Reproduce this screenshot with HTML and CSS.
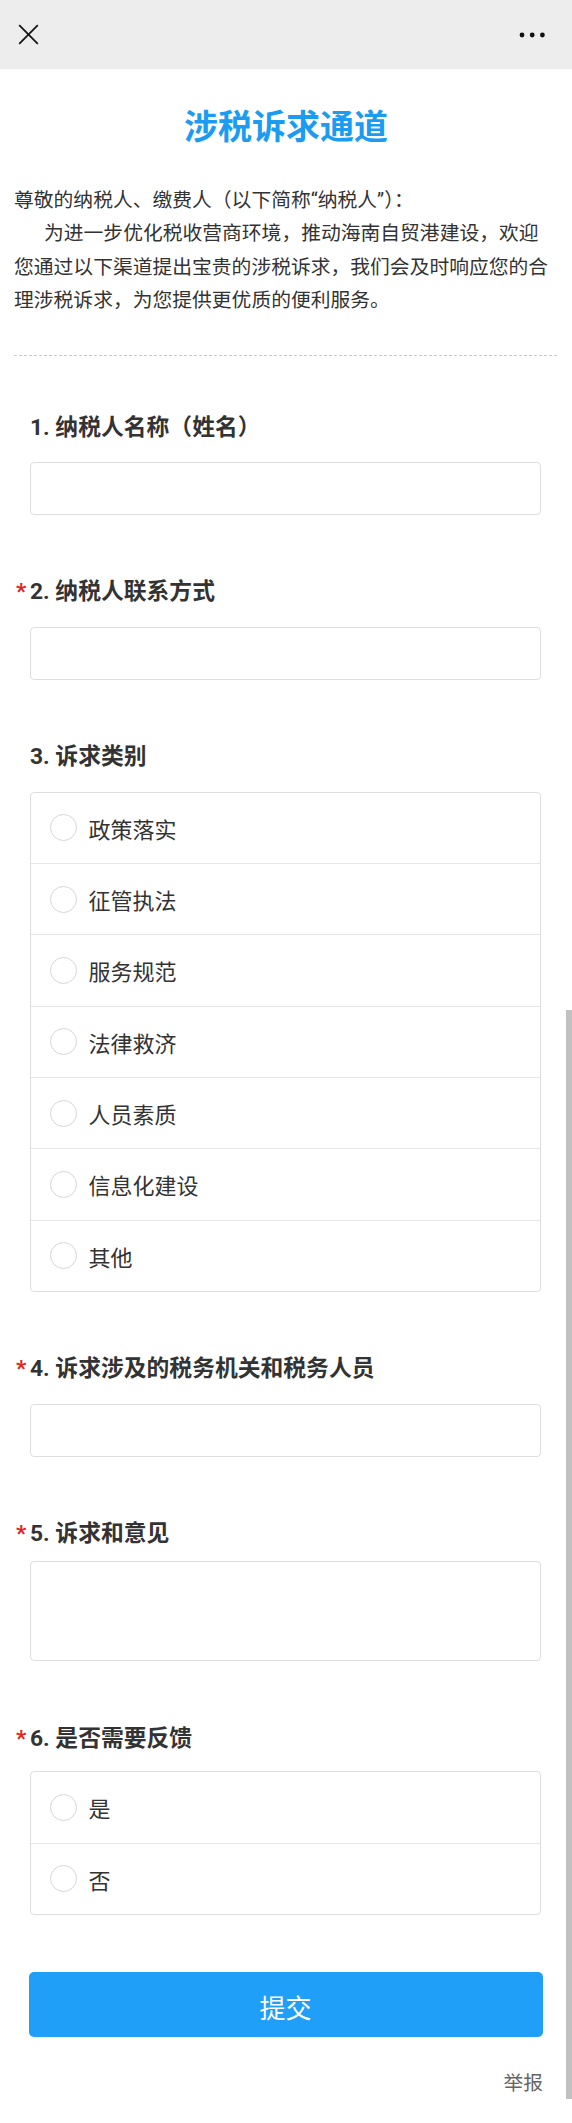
FILE: index.html
```html
<!DOCTYPE html>
<html lang="zh-CN">
<head>
<meta charset="utf-8">
<title>涉税诉求通道</title>
<link rel="stylesheet" href="styles.css">
</head>
<body>
<header class="topbar">
  <svg class="icon-close" width="21" height="21" viewBox="0 0 21 21" aria-hidden="true"><path d="M1.2 1.2 L19.8 19.8 M19.8 1.2 L1.2 19.8" stroke="#161616" stroke-width="1.8" fill="none"/></svg>
  <svg class="icon-more" width="26" height="6" viewBox="0 0 26 6" aria-hidden="true"><circle cx="3" cy="3" r="2.4"/><circle cx="13.2" cy="3" r="2.4"/><circle cx="23.4" cy="3" r="2.4"/></svg>
</header>
<main class="page">
  <h1 class="title">涉税诉求通道</h1>
  <div class="intro">
    <p>尊敬的纳税人、缴费人（以下简称“纳税人”）：</p>
    <p class="indent">为进一步优化税收营商环境，推动海南自贸港建设，欢迎您通过以下渠道提出宝贵的涉税诉求，我们会及时响应您的合理涉税诉求，为您提供更优质的便利服务。</p>
  </div>
  <div class="divider"></div>
  <form class="form">
    <div class="question">
      <div class="q-label"><span class="star"></span><span>1. 纳税人名称（姓名）</span></div>
      <input class="field" type="text">
    </div>
    <div class="question">
      <div class="q-label"><span class="star">*</span><span>2. 纳税人联系方式</span></div>
      <input class="field" type="text">
    </div>
    <div class="question">
      <div class="q-label"><span class="star"></span><span>3. 诉求类别</span></div>
      <div class="options">
        <label class="option"><input class="radio" type="radio" name="q3"><span>政策落实</span></label>
        <label class="option"><input class="radio" type="radio" name="q3"><span>征管执法</span></label>
        <label class="option"><input class="radio" type="radio" name="q3"><span>服务规范</span></label>
        <label class="option"><input class="radio" type="radio" name="q3"><span>法律救济</span></label>
        <label class="option"><input class="radio" type="radio" name="q3"><span>人员素质</span></label>
        <label class="option"><input class="radio" type="radio" name="q3"><span>信息化建设</span></label>
        <label class="option"><input class="radio" type="radio" name="q3"><span>其他</span></label>
      </div>
    </div>
    <div class="question">
      <div class="q-label"><span class="star">*</span><span>4. 诉求涉及的税务机关和税务人员</span></div>
      <input class="field" type="text">
    </div>
    <div class="question">
      <div class="q-label"><span class="star">*</span><span>5. 诉求和意见</span></div>
      <textarea class="field field-area"></textarea>
    </div>
    <div class="question">
      <div class="q-label"><span class="star">*</span><span>6. 是否需要反馈</span></div>
      <div class="options options-tight">
        <label class="option"><input class="radio" type="radio" name="q6"><span>是</span></label>
        <label class="option"><input class="radio" type="radio" name="q6"><span>否</span></label>
      </div>
    </div>
    <button class="submit" type="button">提交</button>
    <div class="report">举报</div>
  </form>
</main>
<div class="scrollbar"></div>
</body>
</html>
```

FILE: styles.css
```css
html, body {
  margin: 0;
  padding: 0;
  background: #fff;
}

body {
  position: relative;
  font-family: Roboto, "Noto Sans CJK SC", sans-serif;
  color: #333;
}

.topbar {
  height: 69px;
  box-sizing: border-box;
  background: #ededed;
  display: flex;
  align-items: center;
  justify-content: space-between;
  padding: 0 26.7px 0 18px;
}

.icon-close, .icon-more {
  display: block;
}

.icon-more circle {
  fill: #111;
}

.title {
  margin: 36.3px 0 0;
  font-size: 34px;
  line-height: 44px;
  font-weight: 700;
  color: #1c9cf0;
  text-align: center;
}

.intro {
  margin: 34.7px 15px 0 14px;
  font-size: 19.8px;
  line-height: 33.5px;
  color: #333;
}

.intro p {
  margin: 0;
}

.indent {
  text-indent: 30px;
}

.divider {
  margin: 37px 15px 0 14px;
  height: 1px;
  background: repeating-linear-gradient(90deg, #c9c9c9 0 3px, transparent 3px 5px);
}

.form {
  margin: 56.6px 0 0;
  padding: 0 31px 0 30px;
}

.question + .question {
  margin-top: 62.5px;
}

.q-label {
  display: flex;
  margin-left: -14px;
  font-size: 22.8px;
  line-height: 30px;
  font-weight: 700;
  color: #333;
}

.star {
  flex: none;
  width: 14px;
  color: #e42323;
}

.field {
  display: block;
  width: 100%;
  height: 53px;
  box-sizing: border-box;
  margin: 19.4px 0 0;
  padding: 0 12px;
  border: 1px solid #dedede;
  border-radius: 4px;
  background: #fff;
  font: inherit;
  font-size: 20px;
  outline: none;
}

.field-area {
  height: 100.5px;
  margin-top: 11.3px;
  resize: none;
}

.options {
  margin-top: 19.4px;
  border: 1px solid #dedede;
  border-radius: 4px;
}

.options-tight {
  margin-top: 17.8px;
}

.option {
  display: flex;
  align-items: center;
  gap: 12px;
  height: 70.3px;
  box-sizing: content-box;
  padding-left: 18.5px;
  font-size: 22px;
  color: #333;
  border-top: 1px solid #e6e6e6;
}

.option:first-child {
  border-top: none;
}

.radio {
  appearance: none;
  -webkit-appearance: none;
  flex: none;
  width: 27px;
  height: 27px;
  margin: 0;
  border: 1px solid #d6d6d6;
  border-radius: 50%;
  background: #fff;
}

.submit {
  display: block;
  width: calc(100% + 3.2px);
  height: 65.3px;
  margin: 56.7px -1.7px 0 -1.5px;
  padding: 4px 0 0;
  border: none;
  border-radius: 5px;
  background: #1f9ff8;
  color: #fff;
  font-family: Roboto, "Noto Sans CJK SC", sans-serif;
  font-size: 26px;
}

.report {
  margin: 31.7px -2px 0 0;
  text-align: right;
  font-size: 19.8px;
  line-height: 30px;
  color: #666;
}

.scrollbar {
  position: absolute;
  top: 1010px;
  left: 566px;
  width: 6px;
  height: 1107px;
  background: #c1c1c1;
}
```
